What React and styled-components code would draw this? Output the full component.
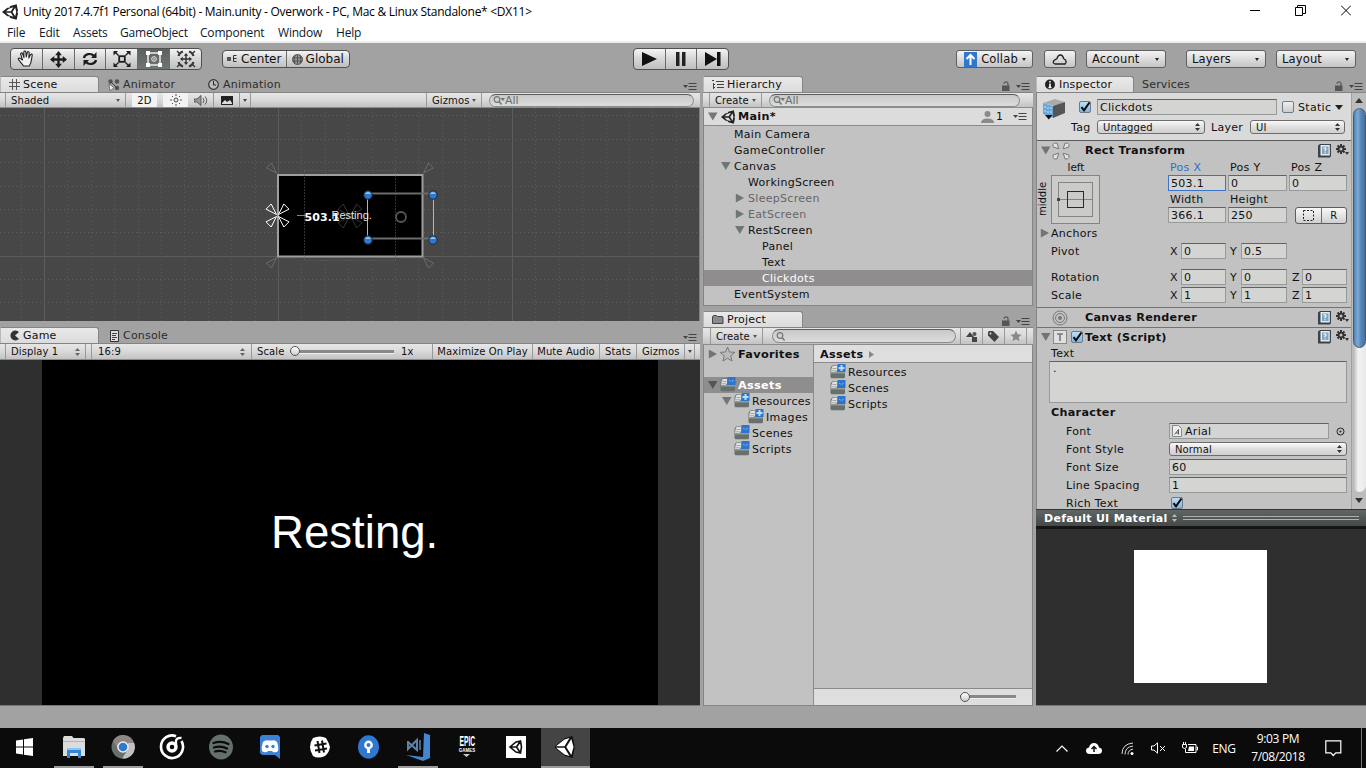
import React from "react";
import styled, { createGlobalStyle, css } from "styled-components";

const Global = createGlobalStyle`
  html, body { margin: 0; padding: 0; width: 1366px; height: 768px; overflow: hidden; background: #a2a2a2; }
  * { box-sizing: border-box; }
  svg { display: block; flex: none; }
`;

const ui = css`
  font-family: "DejaVu Sans", Verdana, sans-serif;
  font-size: 11px;
  letter-spacing: 0.3px;
`;

const Editor = styled.div`
  ${ui}
  width: 1366px;
  height: 768px;
  display: flex;
  flex-direction: column;
  background: #a2a2a2;
  color: #111;
  white-space: nowrap;
  overflow: hidden;
`;

/* ---------- window chrome ---------- */
const TitleBar = styled.div`
  height: 23px;
  background: #fff;
  display: flex;
  align-items: center;
  padding: 0 15px 0 2px;
  font-family: "Open Sans", sans-serif;
  font-size: 12px;
  letter-spacing: -0.27px;
  color: #000;
`;
const TitleText = styled.span`
  margin-left: 5px;
  flex: 1;
`;
const WinButtons = styled.div`
  display: flex;
  gap: 35px;
  align-items: center;
  padding-bottom: 3px;
`;
const MenuBar = styled.div`
  height: 20px;
  background: #fff;
  border-bottom: 2px solid #ececec;
  display: flex;
  padding-left: 7px;
  font-family: "Open Sans", sans-serif;
  font-size: 12px;
  line-height: 20px;
  letter-spacing: -0.2px;
  color: #0a1a30;
`;
const MenuItem = styled.span`
  width: ${(p) => p.$w}px;
`;

/* ---------- main toolbar ---------- */
const Toolbar = styled.div`
  height: 32px;
  display: flex;
  align-items: center;
  padding: 0 10px;
`;
const Group = styled.div`
  display: flex;
  width: ${(p) => p.$w}px;
  height: ${(p) => p.$h || 22}px;
  margin-left: ${(p) => p.$ml || 0}px;
  border: 1px solid #505050;
  border-radius: 4px;
  overflow: hidden;
  background: linear-gradient(#f4f4f4, #d8d8d8 45%, #bfbfbf);
`;
const GroupBtn = styled.div`
  flex: 1;
  display: flex;
  align-items: center;
  justify-content: center;
  gap: ${(p) => p.$gap || 0}px;
  font-size: 12px;
  letter-spacing: 0;
  border-left: 1px solid #6a6a6a;
  background: ${(p) => (p.$on ? "linear-gradient(#5c6160,#6f7574)" : "none")};
  &:first-child { border-left: none; }
`;
const PopBtn = styled.div`
  width: ${(p) => p.$w}px;
  height: 18px;
  margin-left: ${(p) => p.$ml}px;
  border: 1px solid #606060;
  border-radius: 3px;
  background: linear-gradient(#f4f4f4, #dcdcdc 50%, #c4c4c4);
  display: flex;
  align-items: center;
  justify-content: ${(p) => (p.$center ? "center" : "space-between")};
  padding: 0 ${(p) => (p.$center ? 0 : 6)}px 0 ${(p) => (p.$center ? 0 : p.$pl || 5)}px;
  font-size: 11.5px;
  letter-spacing: 0.15px;
`;
const Caret = styled.i`
  border: ${(p) => p.$s || 2.5}px solid transparent;
  border-top: ${(p) => (p.$s || 2.5) + 1}px solid ${(p) => p.$c || "#222"};
  border-bottom: none;
`;

/* ---------- dock layout ---------- */
const Dock = styled.div`
  height: 631px;
  display: flex;
`;
const Column = styled.div`
  width: ${(p) => p.$w}px;
  margin-right: ${(p) => p.$mr || 0}px;
  height: 631px;
  display: flex;
  flex-direction: column;
`;
const TabBar = styled.div`
  height: 17px;
  padding-top: 1px;
  display: flex;
  align-items: stretch;
`;
const Tab = styled.div`
  width: ${(p) => p.$w}px;
  padding-left: ${(p) => p.$pl || 8}px;
  display: flex;
  align-items: center;
  gap: ${(p) => (p.$gap === undefined ? 3 : p.$gap)}px;
  font-size: 11px;
  letter-spacing: 0.2px;
  color: ${(p) => (p.$on ? "#111" : "#2c2c2c")};
  background: ${(p) => (p.$on ? "linear-gradient(#e9e9e9,#dcdcdc)" : "none")};
  border: 1px solid ${(p) => (p.$on ? "#858585" : "transparent")};
  border-bottom: none;
  border-left-color: ${(p) => (p.$on ? "#b9b9b9" : "transparent")};
  border-radius: 0 3px 0 0;
`;
const TabTail = styled.div`
  margin-left: auto;
  padding: 6px 3px 0 0;
  display: flex;
  gap: 6px;
`;
const LockSlot = styled.div`
  margin-top: -1px;
`;
const Strip = styled.div`
  height: ${(p) => p.$h || 17}px;
  display: flex;
  align-items: stretch;
  padding-left: ${(p) => p.$pl || 0}px;
  border-top: 1px solid #838383;
  border-bottom: 1px solid #8c8c8c;
  background: linear-gradient(#e6e6e6, #d9d9d9 50%, #c3c3c3);
  font-size: 10px;
  letter-spacing: 0.1px;
`;
const StripCell = styled.div`
  width: ${(p) => p.$w}px;
  display: flex;
  align-items: center;
  justify-content: ${(p) => p.$j || "flex-start"};
  padding: 0 ${(p) => p.$p || 0}px;
  border-right: ${(p) => (p.$line ? "1px solid #999" : "none")};
  border-left: ${(p) => (p.$lline ? "1px solid #999" : "none")};
  background: ${(p) => (p.$on ? "#f3f3f3" : "none")};
`;
const Search = styled.div`
  width: ${(p) => p.$w}px;
  height: ${(p) => p.$h || 13}px;
  margin: 1px 0 0 ${(p) => p.$ml || 0}px;
  border: 1px solid #8a8f8d;
  border-top-color: #585c5a;
  border-radius: 7px;
  background: linear-gradient(#c9c9c9, #dcdcdc);
  display: flex;
  align-items: center;
  padding-left: 3px;
  font-size: 11px;
  letter-spacing: 0;
  color: #68706d;
`;
const Slider = styled.div`
  width: ${(p) => p.$w}px;
  height: 4px;
  background: #858b89;
  border-bottom: 1px solid #eee;
  display: flex;
  align-items: center;
`;
const Knob = styled.i`
  width: 10px;
  height: 10px;
  flex: none;
  border-radius: 50%;
  border: 1px solid #555;
  background: linear-gradient(#fff, #ccc);
`;
const SceneView = styled.div`
  height: 213px;
  background: #474747;
  border-right: 1px solid #7b8482;
`;
const Gap = styled.div`
  height: ${(p) => p.$h}px;
`;
const GameView = styled.div`
  height: 346px;
  background: #2f2f2f;
  display: flex;
  justify-content: center;
  border-bottom: 1px solid #777;
`;
const GameFrame = styled.div`
  width: 616px;
  background: #000;
  color: #fff;
  font: 45.6px/46px "Liberation Sans", Arial, sans-serif;
  letter-spacing: 0;
  padding: 150px 0 0 229px;
`;

/* ---------- hierarchy / project ---------- */
const Panel = styled.div`
  height: ${(p) => p.$h}px;
  border: 1px solid #858585;
  border-top: none;
  background: #c2c2c2;
  display: flex;
  flex-direction: ${(p) => (p.$row ? "row" : "column")};
`;
const SceneHeader = styled.div`
  height: 18px;
  background: #dcdcdc;
  border-bottom: 1px solid #8a8a8a;
  display: flex;
  align-items: center;
  padding: 0 5px 0 4px;
`;
const TreeRow = styled.div`
  height: 16px;
  display: flex;
  align-items: center;
  padding-left: ${(p) => p.$x}px;
  background: ${(p) => (p.$sel ? "#8f8d8e" : "none")};
  color: ${(p) => (p.$sel ? "#fff" : p.$dim ? "#666" : "#111")};
  font-weight: ${(p) => (p.$bold ? 700 : 400)};
  font-size: ${(p) => (p.$bold ? 11.3 : 11)}px;
  overflow: hidden;
`;
const TreeText = styled.span`
  margin-left: 2px;
`;
const Arrow = styled.i`
  flex: none;
  width: 10px;
  margin-right: ${(p) => p.$mr || 3}px;
  height: 9px;
  background: ${(p) => p.$c || "#6f7674"};
  clip-path: ${(p) => (p.$open ? "polygon(0 5%,95% 5%,48% 95%)" : "polygon(8% 0,90% 50%,8% 100%)")};
  visibility: ${(p) => (p.$none ? "hidden" : "visible")};
`;
const Grow = styled.div`
  flex: 1;
`;
const Folders = styled.div`
  width: 110px;
  padding-top: 1px;
  border-right: 1px solid #8a8a8a;
`;
const Files = styled.div`
  flex: 1;
  display: flex;
  flex-direction: column;
`;
const Crumb = styled.div`
  height: 18px;
  margin-bottom: 1px;
  background: #dedede;
  border-bottom: 1px solid #8a8a8a;
  display: flex;
  align-items: center;
  gap: 6px;
  padding: 1px 0 0 6px;
  font-weight: 700;
  font-size: 11.2px;
`;
const ZoomBar = styled.div`
  height: 17px;
  background: #dedede;
  border-top: 1px solid #8a8a8a;
  display: flex;
  align-items: center;
  justify-content: flex-end;
  padding-right: 16px;
`;

/* ---------- inspector ---------- */
const InspectorBody = styled.div`
  height: 417px;
  border-left: 1px solid #858585;
  border-top: 1px solid #858585;
  background: #c2c2c2;
  display: flex;
  overflow: hidden;
`;
const Props = styled.div`
  width: 314px;
  height: 416px;
  overflow: hidden;
`;
const ScrollTrack = styled.div`
  width: 15px;
  background: #bdbdbd;
  border-left: 1px solid #a0a0a0;
  display: flex;
  flex-direction: column;
  align-items: center;
`;
const ScrollCap = styled.div`
  height: ${(p) => p.$h}px;
  display: flex;
  align-items: center;
`;
const ScrollWell = styled.div`
  width: 13px;
  flex: 1;
  border-radius: 7px;
  background: linear-gradient(90deg, #b4b4b4, #f2f2f2 40%, #e9e9e9);
`;
const ScrollThumb = styled.div`
  width: 13px;
  height: 240px;
  border-radius: 7px;
  border: 1px solid #45596d;
  background: linear-gradient(90deg, #5384b8, #7fa8d2 35%, #5383b8 65%, #48739f);
`;
const ObjectHeader = styled.div`
  height: 48px;
  background: #dadada;
  border-bottom: 1px solid #5c5c5c;
  display: flex;
  padding: 5px 0 0 5px;
`;
const HeaderLines = styled.div`
  display: flex;
  flex-direction: column;
  gap: 4px;
`;
const Line = styled.div`
  display: flex;
  align-items: center;
  height: ${(p) => p.$h || 18}px;
  padding-left: ${(p) => p.$pl || 0}px;
  margin-top: ${(p) => p.$mt || 0}px;
`;
const Label = styled.span`
  width: ${(p) => p.$w}px;
  flex: none;
  margin-left: ${(p) => p.$ml || 0}px;
  font-weight: ${(p) => (p.$bold ? 700 : 400)};
  color: ${(p) => p.$c || "#111"};
  font-size: ${(p) => (p.$bold ? 11.2 : 11)}px;
`;
const Field = styled.div`
  width: ${(p) => p.$w}px;
  height: ${(p) => p.$h || 16}px;
  flex: none;
  margin-right: ${(p) => p.$mr || 0}px;
  border: 1px solid ${(p) => (p.$focus ? "#3a76c8" : "#969a98")};
  border-top-color: ${(p) => (p.$focus ? "#3a76c8" : "#5f6361")};
  background: #d4d4d2;
  display: flex;
  align-items: ${(p) => (p.$top ? "flex-start" : "center")};
  gap: 3px;
  padding-left: ${(p) => p.$pl || 2}px;
`;
const Drop = styled.div`
  width: ${(p) => p.$w}px;
  height: 14px;
  flex: none;
  margin-right: ${(p) => p.$mr || 0}px;
  border: 1px solid #6c6c6c;
  border-radius: 3px;
  background: linear-gradient(#fafafa, #dedede 50%, #cfcfcf);
  display: flex;
  align-items: center;
  justify-content: space-between;
  padding: 0 4px 0 5px;
  font-size: 10px;
  letter-spacing: 0.1px;
`;
const Check = styled.div`
  width: 12px;
  height: 12px;
  flex: none;
  margin-right: ${(p) => p.$mr || 0}px;
  border: 1px solid #6d7b86;
  border-radius: 2px;
  background: ${(p) => (p.$on ? "linear-gradient(#bfe0f5,#7fb4de)" : "linear-gradient(#eee,#ccc)")};
  display: flex;
`;
const ComponentBar = styled.div`
  height: ${(p) => p.$h}px;
  border-top: ${(p) => (p.$line ? "1px solid #6e7674" : "none")};
  padding: 0 2px 0 4px;
  display: flex;
  align-items: center;
`;
const ToolIcons = styled.div`
  margin-left: auto;
  display: flex;
  gap: 5px;
`;
const RectBlock = styled.div`
  height: 64px;
  display: flex;
`;
const SideText = styled.div`
  width: 14px;
  height: 48px;
  margin-top: 15px;
  writing-mode: vertical-rl;
  transform: rotate(180deg);
  text-align: center;
  font-size: 10px;
  letter-spacing: 0;
`;
const AnchorCol = styled.div`
  width: 117px;
`;
const AnchorLabel = styled.div`
  height: 15px;
  width: 50px;
  line-height: 14px;
  text-align: center;
  font-size: 10.5px;
  letter-spacing: 0;
`;
const FieldsCol = styled.div`
  flex: 1;
`;
const SmallGroup = styled.div`
  width: 52px;
  height: 17px;
  margin-left: 6px;
  border: 1px solid #5d5d5d;
  border-radius: 3px;
  background: linear-gradient(#f8f8f8, #d0d0d0);
  display: flex;
`;
const SmallBtn = styled.div`
  flex: 1;
  display: flex;
  align-items: center;
  justify-content: center;
  font-size: 10px;
  & + & { border-left: 1px solid #6c6c6c; }
`;
const MaterialBar = styled.div`
  height: 17px;
  background: linear-gradient(#5f6664, #454948);
  border-top: 1px solid #333;
  display: flex;
  align-items: center;
  color: #fff;
  font-weight: 700;
  font-size: 11px;
  padding: 0 7px 0 8px;
`;
const Grip = styled.div`
  flex: 1;
  height: 4px;
  margin-left: 6px;
  border-top: 1px solid #b0b0b0;
  border-bottom: 1px solid #b0b0b0;
`;
const Preview = styled.div`
  height: 180px;
  background: #2f2f2f;
  border-top: 3px solid #161616;
  border-bottom: 1px solid #777;
  display: flex;
  justify-content: center;
  padding: 21px 1px 0 0;
`;
const Swatch = styled.div`
  width: 133px;
  height: 133px;
  background: #fff;
`;

/* ---------- taskbar ---------- */
const Status = styled.div`
  height: 22px;
`;
const Taskbar = styled.div`
  height: 40px;
  background: #0b0b0b;
  display: flex;
  color: #fff;
  font-family: "Open Sans", sans-serif;
  letter-spacing: -0.35px;
`;
const Task = styled.div`
  width: 49.17px;
  height: 40px;
  display: flex;
  flex-direction: column;
  align-items: center;
  background: ${(p) => (p.$active ? "#444" : "none")};
`;
const TaskIcon = styled.div`
  height: 38px;
  display: flex;
  align-items: center;
`;
const Running = styled.div`
  width: ${(p) => p.$w || 40}px;
  height: 2px;
  background: #9b9b9b;
`;
const Tray = styled.div`
  margin-left: auto;
  display: flex;
  align-items: center;
`;
const TrayItem = styled.div`
  width: ${(p) => p.$w}px;
  display: flex;
  justify-content: center;
  font-size: 12px;
`;
const Clock = styled.div`
  width: 76px;
  text-align: center;
  font-size: 12px;
  line-height: 18px;
`;
const ShowDesktop = styled.div`
  width: 5px;
  height: 40px;
  margin-left: 10px;
  border-left: 1px solid #777;
`;
const EpicBox = styled.div`
  width: 17px;
  height: 24px;
  color: #fff;
  text-align: center;
  font-family: "Liberation Sans", Arial, sans-serif;
  letter-spacing: 0;
  display: flex;
  flex-direction: column;
  align-items: center;
`;
const EpicTop = styled.b`
  font-size: 14px;
  line-height: 13px;
  transform: scaleX(0.48);
`;
const EpicSub = styled.b`
  font-size: 4.5px;
  line-height: 6px;
`;

/* ---------- drawings ---------- */
const UnityMark = ({ s = 16, c = "#222", inner = "#fff" }) => (
  <svg width={s} height={s} viewBox="0 0 24 24">
    <path fill={c} d="M22 .5 12.500 3 11 5.600H8L0 12l8 6.400h3l1.500 2.600L22 23.500l2-9.500-1-2 1-2Z" />
    <path fill={inner} d="M19.800 5.500 15.800 12l4 6.500 1.500-6.500ZM17 4.800 10.300 7 6 10.700h7.300Zm0 14.400L10.300 17 6 13.300h7.300Z" />
  </svg>
);
const UnityFaces = () => (
  <svg width="20" height="22" viewBox="0 0 20 22">
    <path fill="#111" d="M17.500 0 19.500 9v4l-2 9L10 20 0 12v-2L10 2Z" />
    <path fill="#fff" d="M9.500 3.500 1 10.200h8.500l5-8.200ZM1 11.800l8.500 6.700 5 1.500-5-8.200ZM16.300 3l-5 8 5 8L18.500 11Z" />
  </svg>
);
const MenuGlyph = ({ c = "#444" }) => (
  <svg width="14" height="9" viewBox="0 0 14 9">
    <path fill={c} d="M0 3h5L2.500 6Z" />
    <path stroke={c} d="M5.500 1.500h8M5.500 4.500h8M5.500 7.500h8" />
  </svg>
);
const Lock = () => (
  <LockSlot>
    <svg width="8" height="10" viewBox="0 0 8 10">
      <path fill="#555" d="M0 4.500h7.500V10H0Z" />
      <path fill="none" stroke="#555" strokeWidth="1.200" d="M2 2.800C2 .3 6 .3 6 2.800V5" />
    </svg>
  </LockSlot>
);
const UpDown = ({ c = "#333" }) => (
  <svg width="5" height="8" viewBox="0 0 5 8">
    <path fill={c} d="M0 3 2.500 0 5 3ZM0 5h5L2.500 8Z" />
  </svg>
);
const Lens = ({ drop }) => (
  <svg width="12" height="11" viewBox="0 0 12 11">
    <circle cx="4" cy="4.500" r="2.800" fill="none" stroke="#6c7472" strokeWidth="1.200" />
    <path d="m6 6.500 2.600 3" stroke="#6c7472" strokeWidth="1.400" />
    {drop && <path fill="#6c7472" d="M7.500 3H12L9.800 6Z" />}
  </svg>
);
const FolderIcon = ({ plus }) => (
  <svg width="16" height="16" viewBox="0 0 16 16">
    <path fill="#66706d" d="M.5 4 2 1.500h5.500V6H15v7.200l-1 1H1.500l-1-1Z" />
    <path fill="#dfe2e1" d="M1.500 4.500 2.600 2h4.400v4.500L6 8H1Z" />
    <path fill="#939b98" d="M1 8h14v1.500H1Z" />
    <path stroke="#888" d="M2.500 4.500h4M1.500 6.800h5" strokeWidth=".7" />
    <rect x="7.500" y="0" width="8" height="8" fill="#2e73cc" />
    {plus ? <path stroke="#b8def8" strokeWidth="2" d="M11.500 1v6M8.500 4h6" /> : <path stroke="#a8d0f4" d="m9.500 3.200 1 1.200m1.500 0 1.500-1.200" />}
  </svg>
);
const Tick = () => (
  <svg width="12" height="11" viewBox="0 0 12 11">
    <path fill="none" stroke="#0b0b0b" strokeWidth="2" d="M1.500 5.200 4 8.400 9.500.5" />
  </svg>
);
const Book = () => (
  <svg width="13" height="14" viewBox="0 0 13 14">
    <path fill="#3a4346" d="M0 1.500 2 0h11v12l-1 1.500H0Z" />
    <path fill="#e7ecee" d="M2.500 1h9.300v10.500H2.500Z" />
    <path fill="#7da5c4" d="M4 2.500h6.500v7.500H4Z" />
    <path fill="none" stroke="#fff" strokeWidth="1.100" d="M5.500 4.500q1.600-1.400 2.500 0 .2 1-1 1.800v1M7 8.200v1" />
  </svg>
);
const Gear = () => (
  <svg width="13" height="12" viewBox="0 0 13 12">
    <path stroke="#333" strokeWidth="2" d="M5 0v10M0 5h10M1.500 1.500l7 7M8.500 1.500l-7 7" />
    <circle cx="5" cy="5" r="3.300" fill="#333" />
    <circle cx="5" cy="5" r="1.500" fill="#c2c2c2" />
    <path fill="#333" d="M9 8h4l-2 3Z" />
  </svg>
);
const TOOLS = [
  <svg key="h" width="18" height="18" viewBox="0 0 18 18"><path fill="#f2f2f2" stroke="#222" strokeWidth="1.100" strokeLinejoin="round" d="M6.500 16C5 13.500 3 11.500 1.400 9.600c-.7-1.300 1-2 2-1L5.500 10 3.600 4c0-1.300 1.500-1.500 2-.2L7 7.600 6.800 2c.2-1.300 1.800-1.200 2 0L9.300 7l1-4.600c.4-1.200 1.900-.8 1.900.4L11.800 8l1.800-3.400c.8-.9 2-.2 1.600.9-.9 3.500-.4 7-2.900 10.500Z" /></svg>,
  <svg key="m" width="17" height="17" viewBox="0 0 16 16"><path d="M8 2v12M2 8h12" stroke="#1c1c1c" strokeWidth="2.200" /><path fill="#1c1c1c" d="m8 0 3.200 4H4.800Zm0 16 3.200-4H4.800ZM0 8l4-3.200v6.400Zm16 0-4-3.200v6.400Z" /></svg>,
  <svg key="r" width="16" height="16" viewBox="0 0 16 16"><path fill="none" stroke="#1c1c1c" strokeWidth="2.200" d="M2 7c.5-4 7-5.500 10-2M14 9c-.5 4-7 5.500-10 2" /><path fill="#1c1c1c" d="M14.500 1v6H9ZM1.500 15V9H7Z" /></svg>,
  <svg key="s" width="18" height="16" viewBox="0 0 18 16"><rect x="6.200" y="5.200" width="5.600" height="5.600" fill="none" stroke="#1c1c1c" strokeWidth="1.800" /><path stroke="#1c1c1c" strokeWidth="1.400" d="m2 1 3.500 3.500M16 1l-3.500 3.500M2 15l3.500-3.500M16 15l-3.500-3.500" /><path fill="#1c1c1c" d="M.5 0h4.500L.5 4.500Zm17 0H13l4.500 4.500Zm-17 16h4.500L.5 11.500Zm17 0H13l4.500-4.500Z" /></svg>,
  <svg key="t" width="18" height="18" viewBox="0 0 18 18"><path fill="none" stroke="#eee" strokeWidth="1.500" d="M3 3h12v12H3Z" /><path fill="#fff" d="M1 1h4v4H1Zm12 0h4v4h-4ZM1 13h4v4H1Zm12 0h4v4h-4Z" /><circle cx="9" cy="9" r="2.300" fill="none" stroke="#eee" /><circle cx="9" cy="9" r=".8" fill="#eee" /></svg>,
  <svg key="u" width="20" height="18" viewBox="0 0 20 18"><path fill="none" stroke="#3a3a3a" strokeWidth="2.200" d="M7 1.500Q3.500 2.500 2.500 6M13 1.500q3.500 1 4.500 4.500M7 16.500q-3.500-1-4.500-4.500M13 16.500q3.500-1 4.500-4.500" /><path stroke="#333" strokeWidth="1.400" d="M10 4v10M5 9h10" /><path fill="#333" d="m10 3 2.200 2.800H7.800Zm0 12 2.200-2.800H7.800ZM4 9l2.800-2.200v4.400Zm12 0-2.800-2.200v4.400Z" /><path stroke="#333" strokeWidth="1.300" d="m1 1 3 3M19 1l-3 3M1 17l3-3M19 17l-3-3" /></svg>,
];
const Fan = ({ x, y, r, c, parts = [0, 90, 180, 270] }) => (
  <g transform={`translate(${x} ${y})`} stroke={c} fill="none">
    {parts.map((a) => (
      <path key={a} transform={`rotate(${a})`} d={`M1 1 L${r} ${r * 0.55} L${r * 0.55} ${r} Z`} />
    ))}
  </g>
);
const SceneCanvas = () => {
  const xs = [];
  for (let i = -1; i < 29; i++) xs.push(44 + i * 23.4);
  const ys = [115.5, 139.5, 162.5, 186.5, 209.5, 232.5, 256.5, 279.5, 302.5];
  return (
    <svg width="699" height="213" viewBox="0 108 699 213">
      {xs.map((x, i) => (
        <path key={i} d={`M${Math.round(x) + 0.5} 108V321`} stroke={(i - 1) % 10 === 0 ? "#5c5c5c" : "#5a5a5a"} strokeDasharray={(i - 1) % 10 === 0 ? "none" : "1 3"} />
      ))}
      {ys.map((y) => (
        <path key={y} d={`M0 ${y}H699`} stroke={y === 256.5 ? "#5c5c5c" : "#606060"} strokeDasharray={y === 256.5 ? "none" : "1 3"} />
      ))}
      <rect x="278" y="175" width="144.500" height="81.500" fill="#000" stroke="#9c9f9e" strokeWidth="2" />
      <rect x="304.500" y="170.500" width="91" height="90" fill="none" stroke="#666" strokeDasharray="1 2" />
      <Fan x={277.5} y={174} r={11} c="#6c6c6c" parts={[180]} />
      <Fan x={422.5} y={174} r={11} c="#6c6c6c" parts={[270]} />
      <Fan x={277.5} y={257} r={11} c="#6c6c6c" parts={[90]} />
      <Fan x={422.5} y={257} r={11} c="#6c6c6c" parts={[0]} />
      <Fan x={350} y={216} r={12} c="#363636" />
      <Fan x={277.5} y={215.5} r={11.5} c="#fff" />
      <path stroke="#888" d="M297 215.500h9" />
      <path stroke="#6c6c6c" strokeWidth="2" d="M368 193.500h65M368 238.500h65" />
      <path stroke="#b5b5b5" d="M367.500 195v44M433.500 195v44" />
      <circle cx="401" cy="217" r="5" fill="none" stroke="#555" strokeWidth="1.800" />
      {[[368, 195], [433, 195], [368, 240], [433, 240]].map(([x, y]) => (
        <g key={`${x}-${y}`}>
          <circle cx={x} cy={y} r="4.200" fill="#2f78d0" stroke="#1d2a38" />
          <path fill="#8cc4f0" d={`M${x - 3} ${y - 1}a3.200 3.200 0 0 1 6 0Z`} />
        </g>
      ))}
      <text x="331.500" y="219" fill="#e6e6e6" fontFamily="Liberation Sans" fontSize="11" letterSpacing="0">Resting.</text>
      <text x="304.500" y="221" fill="#fff" fontFamily="DejaVu Sans" fontWeight="700" fontSize="11" letterSpacing="0.1">503.1</text>
    </svg>
  );
};
const RectIcon = () => (
  <svg width="18" height="18" viewBox="0 0 18 18">
    <g fill="#e4e4e4" stroke="#777">
      {[0, 90, 180, 270].map((a) => (
        <path key={a} transform={`rotate(${a} 9 9)`} d="M6.800 6.800 1.200 5 1 2.500 2.500 1 5 1.200Z" />
      ))}
    </g>
  </svg>
);
const AnchorBox = () => (
  <svg width="49" height="49" viewBox="0 0 49 49">
    <rect x=".5" y=".5" width="48" height="48" fill="#cbcbc9" stroke="#848484" />
    <rect x="7.500" y="7.500" width="34" height="34" fill="none" stroke="#848484" />
    <path stroke="#848484" d="M7.500 24.500h34" />
    <rect x="16.500" y="16.500" width="16" height="16" fill="none" stroke="#2b2b2b" />
    <rect x="6" y="23" width="3" height="3" fill="#444" />
  </svg>
);
const Cube = () => (
  <svg width="24" height="24" viewBox="0 0 24 24">
    <path fill="#aaa" d="M1 5 13 1l10 3-10 4Z" />
    <path fill="#555" d="m11 8 12-4v11l-12 5Z" />
    <path fill="#6aa6d6" d="m1 5 10 3v12L1 16Z" />
    <path stroke="#c3e2f6" strokeDasharray="2 2" d="M3 8v6M6 9v8M9 9v8" />
    <path fill="#111" d="M3 17h7.500l-3.700 4.500Z" />
  </svg>
);

const TASKS = [
  { svg: <svg width="17" height="18" viewBox="0 0 17 18"><path fill="#fff" d="M0 2.500 7 1.500v7H0ZM8 1.300 17 0v8.500H8ZM0 9.500h7v7l-7-1Zm8 0h9V18l-9-1.300Z" /></svg> },
  { run: 1, svg: <svg width="22" height="22" viewBox="0 0 22 22"><path fill="#dcdcdc" d="M0 2 1 0h8l1.500 2H21l1 1v17H0Z" /><path fill="#b5b5b5" d="M0 5h22v1H0Z" /><path fill="#3385d8" d="M4 22v-8l2-2h10l2 2v8h-3v-5H7v5Z" /><path fill="#8bc4f2" d="M4 12h14v2H4Z" /></svg> },
  { run: 1, svg: <svg width="24" height="26" viewBox="0 0 24 26"><circle cx="12" cy="13" r="11.500" fill="#66706c" /><path fill="#8c8785" d="M2 7A11.500 11.500 0 0 1 23 9H12l-5 6Z" /><path fill="#c3c1bf" d="M23.200 9A11.500 11.500 0 0 1 11 24.500l6-9V9Z" /><circle cx="12" cy="13" r="5.800" fill="#eee" /><circle cx="12" cy="13" r="4.300" fill="#2f78cf" /></svg> },
  { svg: <svg width="26" height="28" viewBox="0 0 26 28"><path fill="none" stroke="#fff" strokeWidth="2.600" d="M17 3.200A11 11.300 0 1 0 22.500 8" /><circle cx="13" cy="14" r="4" fill="none" stroke="#fff" strokeWidth="3.400" /><path fill="none" stroke="#fff" strokeWidth="2.300" d="M17 13V7.500q1-3 5.500-2.500" /></svg> },
  { svg: <svg width="24" height="26" viewBox="0 0 24 26"><ellipse cx="12" cy="13" rx="12" ry="12.500" fill="#65706d" /><path fill="none" stroke="#0b0b0b" strokeWidth="2.300" strokeLinecap="round" d="M4.500 9q8-2.500 15 1M5 13.500q7-2 13 1M6 17.500q5.500-1.500 10.500.8" /></svg> },
  { svg: <svg width="20" height="24" viewBox="0 0 20 24"><path fill="#3c82d4" d="M2 0h16l2 2v22l-5-4H2l-2-2V2Z" /><path fill="#fff" d="M3 7q3-2.500 5-1.500h4Q15 4.500 17 7q2 6 1 9-2 2-5 1l-1-1H8l-1 1q-3 1-5-1Q1 12 3 7Z" /><circle cx="7" cy="11.500" r="1.700" fill="#3c82d4" /><circle cx="13" cy="11.500" r="1.700" fill="#3c82d4" /></svg> },
  { svg: <svg width="20" height="22" viewBox="0 0 20 22"><path fill="#fff" d="M3 2q7-3 13 0 3 5 4 9-1 6-5 9-7 3-12 0Q0 15 0 11 0 6 3 2Z" /><path stroke="#111" strokeWidth="2" d="M7.500 5 9.500 17M12 4.500l2 12M4.500 9.500l12-2M5 14.500l12-2" /></svg> },
  { svg: <svg width="21" height="24" viewBox="0 0 21 24"><ellipse cx="10.500" cy="12" rx="10.500" ry="11.800" fill="#3077cf" /><circle cx="10.500" cy="10" r="3.200" fill="none" stroke="#fff" strokeWidth="2.400" /><path fill="#fff" d="M9 12h3v6H9Z" /></svg> },
  { run: 1, svg: <svg width="24" height="28" viewBox="0 0 24 28"><path fill="#4487d0" d="m18 0 6 2v23l-7 3L0 22l17 2Z" /><path fill="none" stroke="#5d83ad" strokeWidth="2" d="M2 8v8l9-9v10L2 9" /><path stroke="#5d83ad" strokeWidth="1.500" d="M14 7v10" /></svg> },
  { epic: 1 },
  { svg: <svg width="20" height="22" viewBox="0 0 20 22"><path fill="#fff" d="M0 0h20v22H0Z" /><path fill="none" stroke="#111" strokeWidth="1.600" d="M14.500 5 10 6 4 11l6 5 4.500 1 1-6ZM4 11h6.500M10.500 11l4-6M10.500 11l4 6" /></svg> },
  { active: 1, run: 1, svg: <UnityFaces /> },
];

const XYZ = ({ label, vals, mt }) => (
  <Line $pl={14} $mt={mt}>
    <Label $w={119}>{label}</Label>
    {vals.map((v, i) => (
      <React.Fragment key={i}>
        <Label $w={i === 2 ? 10 : 11}>{"XYZ"[i]}</Label>
        <Field $w={[45, 46, 45][i]} $mr={[4, 5, 0][i]}>{v}</Field>
      </React.Fragment>
    ))}
  </Line>
);
const Tools = () => (
  <ToolIcons>
    <Book />
    <Gear />
  </ToolIcons>
);

const HIER = [
  [30, "Main Camera"], [30, "GameController"], [17, "Canvas", "open"], [44, "WorkingScreen"],
  [31, "SleepScreen", "closed", "dim"], [31, "EatScreen", "closed", "dim"], [31, "RestScreen", "open"],
  [58, "Panel"], [58, "Text"], [58, "Clickdots", "", "sel"], [30, "EventSystem"],
];

export default function App() {
  return (
    <Editor>
      <Global />
      <TitleBar>
        <UnityMark s={16} />
        <TitleText>Unity 2017.4.7f1 Personal (64bit) - Main.unity - Overwork - PC, Mac &amp; Linux Standalone* &lt;DX11&gt;</TitleText>
        <WinButtons>
          <svg width="10" height="11"><path stroke="#000" d="M0 5.500h10" /></svg>
          <svg width="11" height="11"><path fill="none" stroke="#000" d="M.5 2.500h7v8h-7ZM2.500 2.500v-2h8v8h-3" /></svg>
          <svg width="10" height="11"><path stroke="#000" d="m0 .5 10 10M10 .5l-10 10" /></svg>
        </WinButtons>
      </TitleBar>
      <MenuBar>
        {[["File", 32], ["Edit", 34], ["Assets", 47], ["GameObject", 80], ["Component", 78], ["Window", 58], ["Help", 40]].map(([t, w]) => (
          <MenuItem key={t} $w={w}>{t}</MenuItem>
        ))}
      </MenuBar>

      <Toolbar>
        <Group $w={192}>{TOOLS.map((t, i) => <GroupBtn key={i} $on={i === 4}>{t}</GroupBtn>)}</Group>
        <Group $w={128} $h={18} $ml={20}>
          <GroupBtn $gap={4}>
            <svg width="10" height="8" viewBox="0 0 10 8"><path fill="#555" d="M0 2h4v4H0Z" /><path fill="none" stroke="#333" d="M9.500.500h-3v6h3M6.500 3.500h3" /></svg>
            Center
          </GroupBtn>
          <GroupBtn $gap={3}>
            <svg width="11" height="11" viewBox="0 0 11 11"><circle cx="5.500" cy="5.500" r="5" fill="#999" stroke="#555" /><path fill="none" stroke="#444" strokeWidth=".8" d="M5.500 1v9M1 4h9M1 7h9M3 1.500q-2 4 0 8M8 1.500q2 4 0 8" /></svg>
            Global
          </GroupBtn>
        </Group>
        <Group $w={96} $ml={283}>
          <GroupBtn><svg width="15" height="14"><path fill="#111" d="M0 0 15 7 0 14Z" /></svg></GroupBtn>
          <GroupBtn><svg width="10" height="14"><path fill="#222" d="M0 0h3.500v14H0ZM6 0h3.500v14H6Z" /></svg></GroupBtn>
          <GroupBtn><svg width="16" height="14"><path fill="#111" d="M0 0 12 7 0 14ZM12 0h3.500v14H12Z" /></svg></GroupBtn>
        </Group>
        <PopBtn $w={77} $ml={227} $pl={7}>
          <svg width="13" height="15" viewBox="0 0 13 15"><path fill="#2f78d2" d="M0 0h13v15H0Z" /><path fill="none" stroke="#fff" strokeWidth="2" d="M6.500 13V3M2.500 7l4-4 4 4" /></svg>
          Collab <Caret />
        </PopBtn>
        <PopBtn $w={32} $ml={11} $center>
          <svg width="16" height="11" viewBox="0 0 16 11"><path fill="none" stroke="#222" strokeWidth="1.300" d="M3 10Q0 9 2 6.500L5 4.500Q6 .8 8.500 1q2.500.2 3 3.500 3 1.500 2.500 4l-1 1.500Z" /></svg>
        </PopBtn>
        <PopBtn $w={80} $ml={10}>Account <Caret /></PopBtn>
        <PopBtn $w={80} $ml={20}>Layers <Caret /></PopBtn>
        <PopBtn $w={80} $ml={10}>Layout <Caret /></PopBtn>
      </Toolbar>

      <Dock>
        <Column $w={700} $mr={3}>
          <TabBar>
            <Tab $w={99} $on>
              <svg width="11" height="11"><path stroke="#555" d="M3.500 0v11M7.500 0v11M0 3.500h11M0 7.500h11" /></svg>
              Scene
            </Tab>
            <Tab $w={100}>
              <svg width="12" height="12" viewBox="0 0 12 12"><g fill="#4c5553"><circle cx="2.500" cy="2.500" r="2.200" /><circle cx="9" cy="2.500" r="2.200" /><circle cx="9" cy="9" r="2.200" /></g><path fill="#eee" stroke="#444" strokeWidth=".6" d="m1 5 5 3.500L2 12Z" /><path stroke="#444" d="m3 3 6 6" /></svg>
              Animator
            </Tab>
            <Tab $w={120} $gap={4}>
              <svg width="11" height="11"><circle cx="5.500" cy="5.500" r="4.800" fill="#bbb" stroke="#333" strokeWidth="1.200" /><path fill="none" stroke="#222" d="M5.500 2v4H8" /></svg>
              Animation
            </Tab>
            <TabTail><MenuGlyph /></TabTail>
          </TabBar>
          <Strip $pl={5} $h={16}>
            <StripCell $w={121} $p={5} $lline $line $j="space-between">Shaded <Caret $c="#555" $s={2} /></StripCell>
            <StripCell $w={6} />
            <StripCell $w={25} $on $j="center">2D</StripCell>
            <StripCell $w={6} />
            <StripCell $w={25} $on $j="center"><svg width="12" height="12" viewBox="0 0 12 12"><circle cx="6" cy="6" r="2" fill="none" stroke="#444" /><path stroke="#555" d="M6 0v2M6 10v2M0 6h2M10 6h2M2 2l1 1M9 9l1 1M10 2 9 3M3 9l-1 1" /></svg></StripCell>
            <StripCell $w={26} $line $j="center"><svg width="14" height="11" viewBox="0 0 14 11"><path fill="#999" stroke="#444" strokeWidth=".8" d="M0 4h3l4-3.500v10L3 7H0Z" /><path fill="none" stroke="#555" d="M9 3q2 2.500 0 5M11 1.500q3.500 4 0 8" /></svg></StripCell>
            <StripCell $w={26} $line $j="center"><svg width="12" height="9" viewBox="0 0 12 9"><path fill="#222" d="M0 0h12v9H0Z" /><path fill="#ddd" d="m1 7 3-3 2 2 3-2 2 3v1H1Z" /></svg></StripCell>
            <StripCell $w={11} $line $j="center"><Caret $c="#444" $s={2} /></StripCell>
            <StripCell $w={176} $line />
            <StripCell $w={55} $p={5} $line $j="space-between">Gizmos <Caret $c="#555" $s={2} /></StripCell>
            <Search $w={205} $ml={7}><Lens drop />All</Search>
          </Strip>
          <SceneView><SceneCanvas /></SceneView>
          <Gap $h={5} />
          <TabBar>
            <Tab $w={99} $on>
              <svg width="11" height="11"><path fill="#333" d="M10 2 6 5.500 10 9A5 5 0 1 1 10 2Z" /></svg>
              Game
            </Tab>
            <Tab $w={100} $pl={10}>
              <svg width="10" height="12"><path fill="#ddd" stroke="#333" d="M.5.500h8v11h-8Z" /><path stroke="#444" d="M2 3.500h5M2 5.500h4M2 7.500h5M2 9.500h3" /></svg>
              Console
            </Tab>
            <TabTail><MenuGlyph /></TabTail>
          </TabBar>
          <Strip $pl={5}>
            <StripCell $w={81} $p={5} $lline $line $j="space-between">Display 1 <UpDown c="#666" /></StripCell>
            <StripCell $w={6} $line />
            <StripCell $w={160} $p={6} $line $j="space-between">16:9 <UpDown c="#666" /></StripCell>
            <StripCell $w={38} $p={5}>Scale</StripCell>
            <StripCell $w={104}><Slider $w={104}><Knob /></Slider></StripCell>
            <StripCell $w={39} $p={7} $line>1x</StripCell>
            <StripCell $w={100} $line $j="center">Maximize On Play</StripCell>
            <StripCell $w={67} $line $j="center">Mute Audio</StripCell>
            <StripCell $w={37} $line $j="center">Stats</StripCell>
            <StripCell $w={47} $p={5}>Gizmos</StripCell>
            <StripCell $w={11} $lline $line $j="center"><Caret $c="#444" $s={2} /></StripCell>
          </Strip>
          <GameView><GameFrame>Resting.</GameFrame></GameView>
        </Column>

        <Column $w={330} $mr={3}>
          <TabBar>
            <Tab $w={100} $on>
              <svg width="12" height="10"><path stroke="#444" d="M4 1.500h8M5 4.500h7M5 7.500h7M0 .500h2M1.500 3v6M2 4.500h1M2 7.500h1" /></svg>
              Hierarchy
            </Tab>
            <TabTail><Lock /><MenuGlyph /></TabTail>
          </TabBar>
          <Strip $pl={6} $h={16}>
            <StripCell $w={53} $p={5} $lline $line $j="space-between">Create <Caret $c="#555" $s={2} /></StripCell>
            <Search $w={251} $ml={7}><Lens drop />All</Search>
          </Strip>
          <Panel $h={198}>
            <SceneHeader>
              <Arrow $open $c="#777" />
              <UnityMark s={14} c="#222" inner="#ddd" />
              <Label $w={180} $ml={3} $bold>Main*</Label>
              <Grow />
              <svg width="13" height="12"><circle cx="6.500" cy="3" r="3" fill="#8a8a8a" /><path fill="#8a8a8a" d="M0 12q0-4.500 6.500-4.500T13 12Z" /></svg>
              <Label $w={17} $ml={2}>1</Label>
              <MenuGlyph />
            </SceneHeader>
            {HIER.map(([x, t, a, f]) => (
              <TreeRow key={t} $x={x} $sel={f === "sel"} $dim={f === "dim"}>
                {a && <Arrow $open={a === "open"} />}
                {t}
              </TreeRow>
            ))}
          </Panel>
          <Gap $h={4} />
          <TabBar>
            <Tab $w={100} $on>
              <svg width="12" height="9"><path fill="#8a8a8a" stroke="#444" d="M.5 1.500 1.500.500h3l1 1h5l.5 1v6H.500Z" /></svg>
              Project
            </Tab>
            <TabTail><Lock /><MenuGlyph /></TabTail>
          </TabBar>
          <Strip $pl={7} $h={18}>
            <StripCell $w={53} $p={5} $lline $line $j="space-between">Create <Caret $c="#555" $s={2} /></StripCell>
            <Search $w={184} $h={14} $ml={9}><Lens /></Search>
            <StripCell $w={5} $line />
            <StripCell $w={22} $line $j="center"><svg width="11" height="11"><path fill="#444" d="M4 1 8 6H0ZM6 6h5v5H6Z" /><circle cx="8.500" cy="3" r="2" fill="#555" /></svg></StripCell>
            <StripCell $w={22} $line $j="center"><svg width="11" height="11"><path fill="#444" d="M0 1 1 0h4l6 6-4.500 5L0 4.500Z" /><circle cx="2.500" cy="2.500" r="1" fill="#ddd" /></svg></StripCell>
            <StripCell $w={22} $line $j="center"><svg width="12" height="12" viewBox="0 0 24 24"><path fill="#888" d="m12 1 3.200 7.600 8 .7-6 5.400 1.800 8L12 18.500 5 22.700l1.800-8-6-5.400 8-.7Z" /></svg></StripCell>
          </Strip>
          <Panel $h={361} $row>
            <Folders>
              <TreeRow $x={4} $bold>
                <Arrow $mr={1} />
                <svg width="17" height="16" viewBox="0 0 24 24"><path fill="#bbb" stroke="#777" strokeWidth="1.500" d="m12 1.500 3 7.500 8 .500-6.200 5.200 2 7.800L12 18.300 5.200 22.500l2-7.800L1 9.500 9 9Z" /></svg>
                <TreeText>Favorites</TreeText>
              </TreeRow>
              <Gap $h={15} />
              <TreeRow $x={4} $sel $bold><Arrow $open $c="#555" $mr={2} /><FolderIcon /><TreeText>Assets</TreeText></TreeRow>
              <TreeRow $x={18}><Arrow $open $mr={2} /><FolderIcon plus /><TreeText>Resources</TreeText></TreeRow>
              <TreeRow $x={44}><FolderIcon plus /><TreeText>Images</TreeText></TreeRow>
              <TreeRow $x={30}><FolderIcon /><TreeText>Scenes</TreeText></TreeRow>
              <TreeRow $x={30}><FolderIcon /><TreeText>Scripts</TreeText></TreeRow>
            </Folders>
            <Files>
              <Crumb>Assets <svg width="5" height="7"><path fill="#888" d="M0 0 5 3.500 0 7Z" /></svg></Crumb>
              <TreeRow $x={16}><FolderIcon plus /><TreeText>Resources</TreeText></TreeRow>
              <TreeRow $x={16}><FolderIcon /><TreeText>Scenes</TreeText></TreeRow>
              <TreeRow $x={16}><FolderIcon /><TreeText>Scripts</TreeText></TreeRow>
              <Grow />
              <ZoomBar><Slider $w={56}><Knob /></Slider></ZoomBar>
            </Files>
          </Panel>
        </Column>

        <Column $w={330}>
          <TabBar>
            <Tab $w={98} $on $gap={4}>
              <svg width="10" height="11"><circle cx="5" cy="5.500" r="5" fill="#222" /><path stroke="#fff" strokeWidth="1.600" d="M5 2v1.600M5 4.600v4M3.500 8.500h3" /></svg>
              Inspector
            </Tab>
            <Tab $w={100} $pl={7}>Services</Tab>
            <TabTail><Lock /><MenuGlyph /></TabTail>
          </TabBar>
          <InspectorBody>
            <Props>
              <ObjectHeader>
                <Cube />
                <HeaderLines>
                  <Line $pl={13}>
                    <Check $on $mr={6}><Tick /></Check>
                    <Field $w={180} $mr={5}>Clickdots</Field>
                    <Check $mr={4} />
                    <Label $w={37}>Static</Label>
                    <Caret $s={4.5} />
                  </Line>
                  <Line $h={14} $pl={5}>
                    <Label $w={26}>Tag</Label>
                    <Drop $w={108} $mr={6}>Untagged <UpDown /></Drop>
                    <Label $w={39}>Layer</Label>
                    <Drop $w={95}>UI <UpDown /></Drop>
                  </Line>
                </HeaderLines>
              </ObjectHeader>
              <ComponentBar $h={19}>
                <Arrow $open $mr={1} /><RectIcon />
                <Label $w={150} $ml={15} $bold>Rect Transform</Label>
                <Tools />
              </ComponentBar>
              <RectBlock>
                <SideText>middle</SideText>
                <AnchorCol><AnchorLabel>left</AnchorLabel><AnchorBox /></AnchorCol>
                <FieldsCol>
                  <Line $h={15} $pl={2}><Label $w={60} $c="#2f6fc8">Pos X</Label><Label $w={61}>Pos Y</Label><Label $w={50}>Pos Z</Label></Line>
                  <Line $h={16}><Field $w={58} $mr={2} $focus>503.1</Field><Field $w={59} $mr={2}>0</Field><Field $w={58}>0</Field></Line>
                  <Line $h={16} $pl={2}><Label $w={60}>Width</Label><Label $w={61}>Height</Label></Line>
                  <Line $h={16}>
                    <Field $w={58} $mr={2}>366.1</Field><Field $w={59} $mr={2}>250</Field>
                    <SmallGroup>
                      <SmallBtn><svg width="11" height="11"><path fill="none" stroke="#222" strokeDasharray="2 1.500" d="M.5.500h10v10H.500Z" /></svg></SmallBtn>
                      <SmallBtn>R</SmallBtn>
                    </SmallGroup>
                  </Line>
                </FieldsCol>
              </RectBlock>
              <Line $pl={3}><Arrow $mr={1} /><Label $w={80}>Anchors</Label></Line>
              <XYZ label="Pivot" vals={["0", "0.5"]} />
              <XYZ label="Rotation" vals={["0", "0", "0"]} mt={8} />
              <XYZ label="Scale" vals={["1", "1", "1"]} />
              <Gap $h={3} />
              <ComponentBar $h={20} $line>
                <Arrow $none $mr={1} />
                <svg width="16" height="16"><circle cx="8" cy="8" r="7" fill="none" stroke="#777" /><circle cx="8" cy="8" r="4.500" fill="none" stroke="#777" /><circle cx="8" cy="8" r="2" fill="#777" /></svg>
                <Label $w={160} $ml={17} $bold>Canvas Renderer</Label>
                <Tools />
              </ComponentBar>
              <ComponentBar $h={19} $line>
                <Arrow $open $mr={2} />
                <svg width="14" height="14"><rect x=".5" y=".5" width="13" height="13" fill="#e0e0e0" stroke="#888" /><path stroke="#777" strokeWidth="1.600" d="M4 4h6M7 4v7" /></svg>
                <svg width="4" height="1" />
                <Check $on $mr={2}><Tick /></Check>
                <Label $w={120} $bold>Text (Script)</Label>
                <Tools />
              </ComponentBar>
              <Line $h={15} $pl={14}><Label $w={50}>Text</Label></Line>
              <Line $h={42} $pl={12}><Field $w={298} $h={42} $pl={3} $top>.</Field></Line>
              <Line $h={19} $pl={14}><Label $w={90} $bold>Character</Label></Line>
              <Line $pl={29}><Label $w={103}>Font</Label><Field $w={160} $mr={7}><svg width="10" height="12"><path fill="#eee" stroke="#888" d="M.5.500h6l3 3v8h-9Z" /><path fill="none" stroke="#555" d="m2.500 9.500 4-5v5M4 8h2" /></svg>Arial</Field><svg width="9" height="9"><circle cx="4.500" cy="4.500" r="3.500" fill="none" stroke="#222" /><circle cx="4.500" cy="4.500" r="1" fill="#222" /></svg></Line>
              <Line $pl={29}><Label $w={103}>Font Style</Label><Drop $w={178}>Normal <UpDown /></Drop></Line>
              <Line $pl={29}><Label $w={103}>Font Size</Label><Field $w={178}>60</Field></Line>
              <Line $pl={29}><Label $w={103}>Line Spacing</Label><Field $w={178}>1</Field></Line>
              <Line $pl={29}><Label $w={105}>Rich Text</Label><Check $on><Tick /></Check></Line>
            </Props>
            <ScrollTrack>
              <ScrollCap $h={15}><svg width="8" height="5"><path fill="#333" d="M0 5 4 0 8 5Z" /></svg></ScrollCap>
              <ScrollWell><ScrollThumb /></ScrollWell>
              <ScrollCap $h={17}><svg width="8" height="5"><path fill="#333" d="M0 0h8L4 5Z" /></svg></ScrollCap>
            </ScrollTrack>
          </InspectorBody>
          <MaterialBar>Default UI Material&nbsp;<UpDown c="#bbb" /><Grip /></MaterialBar>
          <Preview><Swatch /></Preview>
        </Column>
      </Dock>

      <Status />
      <Taskbar>
        {TASKS.map((t, i) => (
          <Task key={i} $active={t.active}>
            <TaskIcon>
              {t.epic ? <EpicBox><EpicTop>EPIC</EpicTop><EpicSub>GAMES</EpicSub><svg width="7" height="3"><path fill="#ccc" d="M0 0h7L3.500 3Z" /></svg></EpicBox> : t.svg}
            </TaskIcon>
            {t.run && <Running $w={t.active ? 49 : 40} />}
          </Task>
        ))}
        <Tray>
          <TrayItem $w={32}><svg width="12" height="7"><path fill="none" stroke="#fff" strokeWidth="1.200" d="m.5 6.500 5.500-5.500 5.500 5.500" /></svg></TrayItem>
          <TrayItem $w={32}><svg width="16" height="11"><path fill="#fff" d="M4 11Q0 11 0 7.500 0 5 3 4.500 4 0 8 0t5 4.500q3 .5 3 3 0 3.500-4 3.500Z" /><path stroke="#111" strokeWidth="1.500" fill="none" d="M8 9V4M5.500 6 8 3.500 10.500 6" /></svg></TrayItem>
          <TrayItem $w={34}><svg width="13" height="13"><g fill="none" stroke="#ddd"><path d="M1 12Q1 2 12 1M4 12.500Q4 5 12 4M7 12.500Q7 8 12 7" /></g><circle cx="11" cy="11.500" r="1.500" fill="#fff" /></svg></TrayItem>
          <TrayItem $w={28}><svg width="15" height="12"><path fill="none" stroke="#fff" d="M.5 4h2.500L6.500.8v10.400L3 8H.500ZM9 4l5 5M14 4 9 9" /></svg></TrayItem>
          <TrayItem $w={36}><svg width="16" height="12"><path fill="none" stroke="#fff" d="M6 2.500h8v8H3.500V7M14.500 5h1v3h-1M.5 2.500h4v3q-2 2-4 0ZM1.500 0v2M3.500 0v2" /><path fill="#fff" d="M7 4.500h5V9H6Z" /></svg></TrayItem>
          <TrayItem $w={32}>ENG</TrayItem>
          <Clock>9:03 PM<br />7/08/2018</Clock>
          <TrayItem $w={35}><svg width="17" height="17"><path fill="none" stroke="#fff" strokeWidth="1.200" d="M.8.800h15v12h-5L8.300 15.500 5.800 12.800h-5Z" /></svg></TrayItem>
          <ShowDesktop />
        </Tray>
      </Taskbar>
    </Editor>
  );
}
